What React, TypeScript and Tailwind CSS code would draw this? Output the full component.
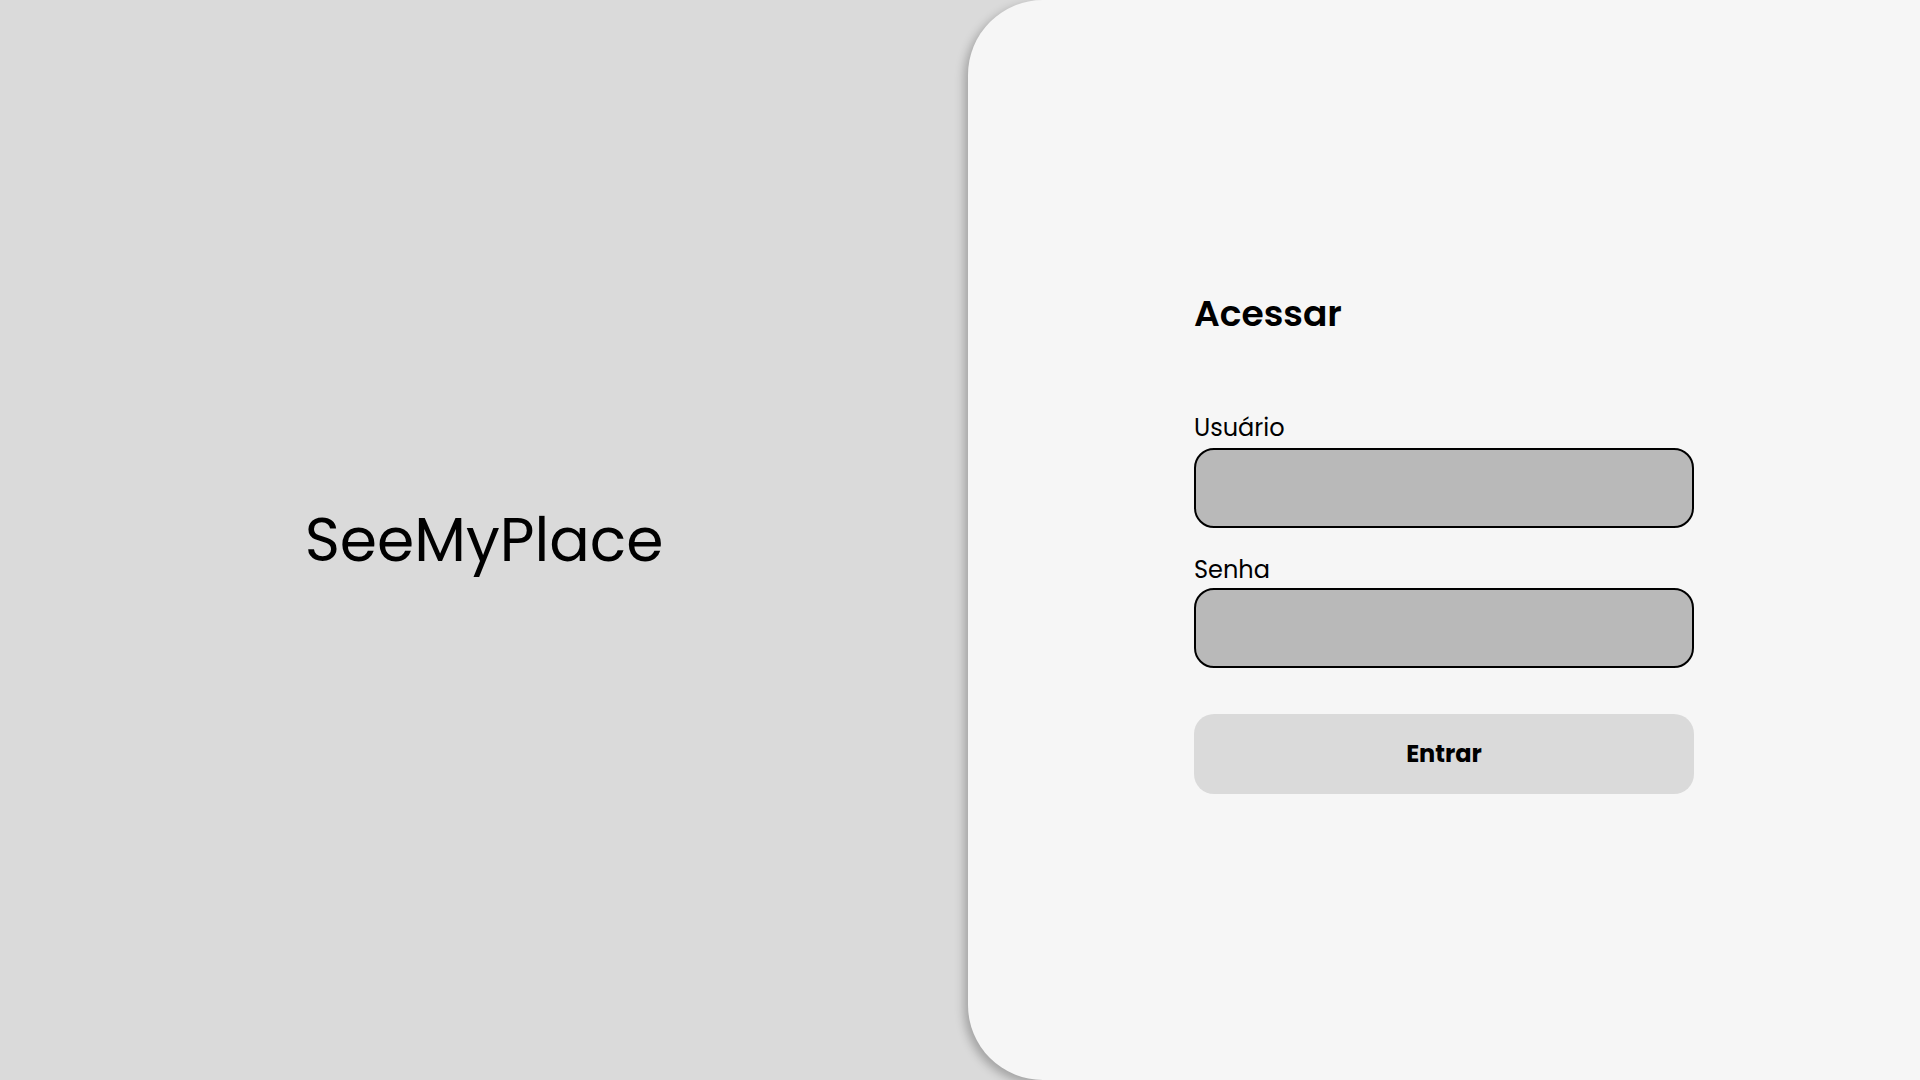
export default function App() {
  return (
    <main className="grid min-h-screen grid-cols-[968fr_952fr] bg-[#dadada] font-['Poppins','Inter',sans-serif] text-black">
      <section className="flex items-center justify-center">
        <h1 className="text-6xl leading-24">SeeMyPlace</h1>
      </section>
      <section className="flex items-center justify-center rounded-l-[75px] bg-[#f6f6f6] shadow-[-4px_4px_10px_rgba(0,0,0,0.25)]">
        <form className="flex w-[500px] flex-col" onSubmit={(e) => e.preventDefault()}>
          <h2 className="mb-17 text-4xl leading-14 font-semibold">Acessar</h2>
          <label htmlFor="user" className="mb-0.5 text-2xl leading-9">Usuário</label>
          <input id="user" type="text" className="h-20 rounded-[20px] border-2 border-black bg-[#b9b9b9] px-5 text-2xl" />
          <label htmlFor="password" className="mt-6 text-2xl leading-9">Senha</label>
          <input id="password" type="password" className="h-20 rounded-[20px] border-2 border-black bg-[#b9b9b9] px-5 text-2xl" />
          <button type="submit" className="mt-[46px] h-20 rounded-[20px] bg-[#dadada] text-2xl font-bold">Entrar</button>
        </form>
      </section>
    </main>
  );
}
